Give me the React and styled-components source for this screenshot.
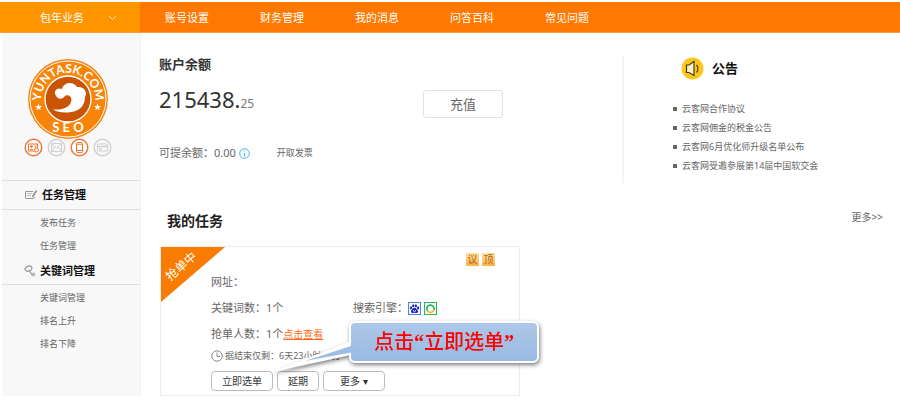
import React from "react";
import styled, { createGlobalStyle } from "styled-components";

const GlobalStyle = createGlobalStyle`
  *, *::before, *::after { box-sizing: border-box; }
  body {
    margin: 0;
    background: #fff;
    color: #666;
    font-family: "Noto Sans", "Noto Sans CJK SC", sans-serif;
    font-size: 11px;
    line-height: 16px;
  }
  h1, h2, h3, p, ul { margin: 0; padding: 0; }
  ul { list-style: none; }
  a { color: inherit; text-decoration: none; }
  button { font: inherit; cursor: pointer; }
  svg { display: block; flex: none; }
`;

const Page = styled.div`
  padding: 2px 0 5px;
`;

const Header = styled.header`
  display: flex;
  height: 31px;
  background: #ff7800;
  color: #fff;
  border-bottom: 1px solid #ff9a40;
`;

const ServiceButton = styled.button`
  display: flex;
  align-items: center;
  justify-content: space-between;
  width: 140px;
  padding: 2px 23px 0 40px;
  border: 0;
  background: #ff9600;
  color: #fff;
`;

const Nav = styled.nav`
  display: flex;
  align-items: center;
  gap: 51px;
  padding: 2px 0 0 25px;
  white-space: nowrap;
`;

const Body = styled.div`
  display: flex;
  align-items: stretch;
`;

const Sidebar = styled.aside`
  flex: none;
  width: 141px;
  border-left: 2px solid #fff;
  border-right: 1px solid #f4f4f4;
  background: #f8f8f8;
`;

const Profile = styled.div`
  display: flex;
  flex-direction: column;
  align-items: center;
  padding: 26px 6px 23px 0;
`;

const Badges = styled.div`
  display: flex;
  gap: 4px;
  margin-top: -1px;
`;

const MenuTitle = styled.h2`
  display: flex;
  align-items: center;
  gap: 4px;
  height: ${(p) => (p.$first ? 30 : 28)}px;
  padding-left: 22px;
  border-top: ${(p) => (p.$first ? "1px solid #ddd" : "0")};
  border-bottom: 1px solid #ddd;
  color: #111;
  font-size: 11px;
  font-weight: 700;
`;

const MenuList = styled.ul`
  padding: 1px 0 0 38px;
  font-size: 9px;
  line-height: 23px;
`;

const Main = styled.main`
  flex: 1;
  min-width: 0;
  padding: 23px 17px 0 18px;
`;

const Overview = styled.div`
  display: flex;
`;

const Account = styled.section`
  flex: 1;
  display: flex;
  justify-content: space-between;
  padding-right: 119px;
  border-right: 2px solid #f4f4f4;
  height: 127px;
`;

const AccountTitle = styled.h2`
  color: #333;
  font-size: 13px;
  font-weight: 700;
  line-height: 16px;
`;

const Amount = styled.p`
  margin-top: 11px;
  color: #333;
  font-size: 22px;
  line-height: 32px;

  small {
    font-size: 12px;
    color: #777;
  }
`;

const Withdraw = styled.p`
  display: flex;
  align-items: center;
  margin-top: 25px;
  gap: 3px;

  a {
    margin-left: 24px;
    font-size: 9px;
  }
`;

const RechargeButton = styled.button`
  width: 80px;
  height: 28px;
  margin-top: 34px;
  border: 1px solid #e2e2e2;
  border-radius: 3px;
  background: #fff;
  color: #666;
  font-size: 13px;
  line-height: 18px;
  padding: 0;
`;

const Notices = styled.section`
  width: 259px;
  padding-left: 49px;
`;

const NoticeTitle = styled.h2`
  display: flex;
  align-items: center;
  gap: 8px;
  padding-left: 8px;
  color: #111;
  font-size: 13px;
  line-height: 24px;
`;

const NoticeList = styled.ul`
  margin-top: 19px;
  font-size: 9px;
  line-height: 19px;

  li {
    display: flex;
    align-items: center;
    gap: 5px;
  }

  li::before {
    content: "";
    width: 4px;
    height: 4px;
    background: #666;
  }
`;

const TasksHead = styled.div`
  display: flex;
  justify-content: space-between;
  align-items: flex-start;
  padding: 28px 0 15px 8px;

  h2 {
    color: #222;
    font-size: 14px;
    line-height: 20px;
  }

  a {
    font-size: 10px;
    line-height: 12px;
  }
`;

const Card = styled.article`
  position: relative;
  max-width: 360px;
  margin-left: 1px;
  padding: 6px 24px 4px 50px;
  border: 1px solid #eee;
`;

const Ribbon = styled.svg`
  position: absolute;
  top: 0;
  left: 0;
`;

const Tags = styled.div`
  display: flex;
  justify-content: flex-end;
  gap: 3px;
`;

const Tag = styled.span`
  width: 13px;
  height: 13px;
  background: linear-gradient(#ffe3a0, #f9b344);
  color: #b5601a;
  font-size: 10px;
  line-height: 13px;
  text-align: center;
`;

const Fields = styled.div`
  display: grid;
  grid-template-columns: 142px 1fr;
  row-gap: 10px;
  margin-top: 8px;
`;

const Field = styled.p`
  grid-column: ${(p) => (p.$wide ? "1 / -1" : "auto")};
  display: flex;
  align-items: center;
  white-space: nowrap;
`;

const ViewLink = styled.a`
  color: #ff6a10;
  font-size: 10px;
  text-decoration: underline;
`;

const Engines = styled.span`
  display: flex;
  gap: 3px;
`;

const Deadline = styled.p`
  display: flex;
  align-items: center;
  gap: 2px;
  margin-top: 6px;
  font-size: 9px;
  white-space: nowrap;
`;

const Actions = styled.div`
  display: flex;
  gap: 4px;
  margin-top: 7px;
`;

const ActionButton = styled.button`
  height: 20px;
  padding: 0 ${(p) => (p.$roomy ? 16 : 10)}px;
  border: 1px solid #bbb;
  border-radius: 4px;
  background: #fff;
  color: #333;
  font-size: 10px;
  line-height: 16px;
  white-space: nowrap;
`;

const Callout = styled.div`
  position: absolute;
  left: 188px;
  top: 74px;
  width: 190px;
  filter: drop-shadow(1px 2px 2px rgba(0, 0, 0, 0.5));
`;

const CalloutText = styled.p`
  border: 2px solid #fff;
  border-radius: 6px;
  background: linear-gradient(#adc8e8, #99bae3);
  color: #f00;
  font-family: "Liberation Serif", "Noto Sans CJK SC", serif;
  font-size: 20px;
  font-weight: 500;
  line-height: 38px;
  text-align: center;
  white-space: nowrap;
`;

const Quote = styled.span`
  font-weight: 700;
`;

const Tail = styled.svg`
  position: absolute;
  left: -77px;
  top: 18px;
`;

const Logo = () => (
  <svg width="80" height="80" viewBox="0 0 80 80" role="img" aria-label="YUNTASK.COM SEO">
    <defs>
      <path id="logo-top" d="M13.500 46A27 27 0 1 1 66.500 46" />
    </defs>
    <circle cx="40" cy="40" r="40" fill="#f58a1c" />
    <circle cx="40" cy="40" r="38" fill="#f98508" stroke="#fff" strokeWidth="1" />
    <circle cx="40" cy="40" r="23" fill="#c95406" stroke="#fff" strokeWidth="1.3" />
    <path
      d="M28 37C25 32 29 28 34 30C36 23 45 22 49 28C56 27 60 33 57 38C57 48 50 53 40 53.500C34 54 28 52.500 25 50.500C34 51 41 49 43 43C45 38 40 35 37 37C34 41 30 40 28 37Z"
      fill="#fff"
    />
    {[10.5, 69.5].map((x) => (
      <path
        key={x}
        transform={`translate(${x} 48)`}
        d="M0-3.500L1-1H3.500L1.500.800L2.200 3.300L0 1.800L-2.200 3.300L-1.500.800L-3.500-1H-1Z"
        fill="#fff"
      />
    ))}
    <g fill="#fff" fontFamily="Lato, sans-serif" fontWeight="700" textAnchor="middle">
      <text fontSize="12">
        <textPath href="#logo-top" startOffset="50%">YUNTASK.COM</textPath>
      </text>
      <text fontSize="13" x="40" y="73">
        S E O
      </text>
    </g>
  </svg>
);

const badgeShapes = {
  card: (
    <>
      <rect x="4.500" y="6" width="9" height="7" />
      <circle cx="7.500" cy="8.500" r="1" fill="currentColor" />
      <path d="M6 11.500H9M10.500 8H12.500M10.500 10H12" />
      <circle cx="12.500" cy="12" r="2" fill="#fff" />
    </>
  ),
  mail: <path d="M4.500 5.500H14.500V13.500H4.500ZL9.500 10L14.500 5.500M4.500 13.500L8 9M14.500 13.500L11 9" />,
  phone: (
    <>
      <rect x="6.500" y="4.500" width="6" height="10" rx="1" />
      <path d="M6.500 6.200H12.500M6.500 12.500H12.500" />
    </>
  ),
  bank: (
    <>
      <rect x="4.500" y="6" width="10" height="7" rx="1" />
      <path d="M4.500 8.500H14.500M6 11H9" strokeWidth="1.500" />
    </>
  ),
};

const BadgeIcon = ({ kind, active }) => (
  <svg width="19" height="19" viewBox="0 0 19 19" fill="none" stroke="currentColor" color={active ? "#f37332" : "#d0d0d0"}>
    <circle cx="9.500" cy="9.500" r="8.300" fill={active ? "#fff" : "#f8f8f8"} strokeWidth="1.400" />
    {badgeShapes[kind]}
  </svg>
);

const NoteIcon = () => (
  <svg width="14" height="12" viewBox="0 0 14 12" fill="none" stroke="#999">
    <path d="M9 2.500H1.500V9.500H9.500L11 8" />
    <path d="M3 4.500H8M3 6.500H7" stroke="#bbb" />
    <path d="M12.500 1.500L8.500 8" strokeWidth="1.800" />
  </svg>
);

const KeyIcon = () => (
  <svg width="12" height="12" viewBox="0 0 12 12" fill="none" stroke="#999" strokeWidth="1.300">
    <ellipse cx="4.500" cy="3.700" rx="3.500" ry="2.400" transform="rotate(-20 4.500 3.700)" />
    <path d="M5.500 6L8.500 10.500M8 9L10.500 8M9 11L11 9.500" />
  </svg>
);

const SpeakerIcon = () => (
  <svg width="23" height="23" viewBox="0 0 23 23" fill="none" stroke="#4a3b17" strokeWidth="1.200">
    <circle cx="11.500" cy="11.500" r="11" fill="#fdc71f" stroke="none" />
    <path d="M5.500 8H8L13 4.500V18.500L8 15.500H5.500Z" fill="#fff1bd" />
    <path d="M15.500 8Q18.500 11.500 15.500 15.500" />
  </svg>
);

const InfoIcon = () => (
  <svg width="11" height="11" viewBox="0 0 11 11" fill="none" stroke="#3db5f2">
    <circle cx="5.500" cy="5.500" r="4.800" />
    <path d="M5.500 2.500V3.500M5.500 4.800V8.500" strokeWidth="1.200" />
  </svg>
);

const ClockIcon = () => (
  <svg width="12" height="12" viewBox="0 0 12 12" fill="none" stroke="#888">
    <circle cx="6" cy="6" r="5.200" />
    <path d="M6 2.500V6.500H9" />
  </svg>
);

const BaiduIcon = () => (
  <svg width="13" height="13" viewBox="0 0 13 13">
    <rect x=".5" y=".5" width="12" height="12" fill="#fff" stroke="#4a86d8" />
    <g fill="#1c1ccf">
      <ellipse cx="3" cy="6" rx="1.100" ry="1.400" />
      <ellipse cx="5.200" cy="3.700" rx="1.100" ry="1.500" />
      <ellipse cx="7.900" cy="3.700" rx="1.100" ry="1.500" />
      <ellipse cx="10.100" cy="6" rx="1.100" ry="1.400" />
      <path d="M6.500 5.800C8 5.800 8.500 7.200 9.500 8.200C10.800 9.800 9.500 11.200 8 10.900Q6.500 10.500 5 10.900C3.500 11.200 2.300 9.800 3.500 8.200C4.500 7.200 5 5.800 6.500 5.800Z" />
    </g>
    <path d="M5.500 8V9.300H7.500V8" fill="none" stroke="#fff" strokeWidth=".7" />
  </svg>
);

const SearchRingIcon = () => (
  <svg width="13" height="13" viewBox="0 0 13 13" fill="none">
    <rect x=".5" y=".5" width="12" height="12" fill="#fff" stroke="#1fb85b" />
    <path d="M3.500 9A3.700 3.700 0 1 1 10 7.800" stroke="#21b35a" strokeWidth="1.700" />
    <path d="M3.500 9A3.700 3.700 0 0 0 10 7.800" stroke="#f6b426" strokeWidth="1.700" />
  </svg>
);

const navItems = ["账号设置", "财务管理", "我的消息", "问答百科", "常见问题"];
const notices = [
  "云客网合作协议",
  "云客网佣金的税金公告",
  "云客网6月优化师升级名单公布",
  "云客网受邀参展第14届中国软交会",
];

const Menu = ({ items }) => (
  <MenuList>
    {items.map((item) => (
      <li key={item}><a href="#">{item}</a></li>
    ))}
  </MenuList>
);

export default function App() {
  return (
    <Page lang="zh-CN">
      <GlobalStyle />
      <Header>
        <ServiceButton type="button">
          包年业务
          <svg width="9" height="6" viewBox="0 0 9 6" fill="none" stroke="#ffe0b0">
            <path d="M1 1L4.500 4.500L8 1" />
          </svg>
        </ServiceButton>
        <Nav>
          {navItems.map((item) => (
            <a href="#" key={item}>{item}</a>
          ))}
        </Nav>
      </Header>
      <Body>
        <Sidebar>
          <Profile>
            <Logo />
            <Badges>
              <BadgeIcon kind="card" active />
              <BadgeIcon kind="mail" />
              <BadgeIcon kind="phone" active />
              <BadgeIcon kind="bank" />
            </Badges>
          </Profile>
          <MenuTitle $first><NoteIcon />任务管理</MenuTitle>
          <Menu items={["发布任务", "任务管理"]} />
          <MenuTitle><KeyIcon />关键词管理</MenuTitle>
          <Menu items={["关键词管理", "排名上升", "排名下降"]} />
        </Sidebar>
        <Main>
          <Overview>
            <Account>
              <div>
                <AccountTitle>账户余额</AccountTitle>
                <Amount>215438.<small>25</small></Amount>
                <Withdraw>
                  可提余额：0.00 <InfoIcon />
                  <a href="#">开取发票</a>
                </Withdraw>
              </div>
              <RechargeButton type="button">充值</RechargeButton>
            </Account>
            <Notices>
              <NoticeTitle><SpeakerIcon />公告</NoticeTitle>
              <NoticeList>
                {notices.map((notice) => (
                  <li key={notice}><a href="#">{notice}</a></li>
                ))}
              </NoticeList>
            </Notices>
          </Overview>
          <TasksHead>
            <h2>我的任务</h2>
            <a href="#">更多&gt;&gt;</a>
          </TasksHead>
          <Card>
            <Ribbon width="64" height="55" viewBox="0 0 64 55">
              <path d="M0 0H64L0 55Z" fill="#f97c00" />
              <text
                transform="translate(20 19) rotate(-41)"
                fill="#fff"
                fontSize="12"
                textAnchor="middle"
                dominantBaseline="central"
              >
                抢单中
              </text>
            </Ribbon>
            <Tags>
              <Tag>议</Tag>
              <Tag>顶</Tag>
            </Tags>
            <Fields>
              <Field $wide>网址：</Field>
              <Field>关键词数：1个</Field>
              <Field>
                搜索引擎：
                <Engines><BaiduIcon /><SearchRingIcon /></Engines>
              </Field>
              <Field $wide>抢单人数：1个<ViewLink href="#">点击查看</ViewLink></Field>
            </Fields>
            <Deadline><ClockIcon />据结束仅剩：6天23小时59分</Deadline>
            <Actions>
              <ActionButton type="button">立即选单</ActionButton>
              <ActionButton type="button">延期</ActionButton>
              <ActionButton type="button" $roomy>更多 ▾</ActionButton>
            </Actions>
            <Callout>
              <Tail width="84" height="34" viewBox="0 0 84 34">
                <path d="M0 33L79 2V16Z" fill="#fff" />
                <path d="M33 22L82 6V13Z" fill="#9dbde4" />
              </Tail>
              <CalloutText>点击<Quote>“</Quote>立即选单<Quote>”</Quote></CalloutText>
            </Callout>
          </Card>
        </Main>
      </Body>
    </Page>
  );
}
